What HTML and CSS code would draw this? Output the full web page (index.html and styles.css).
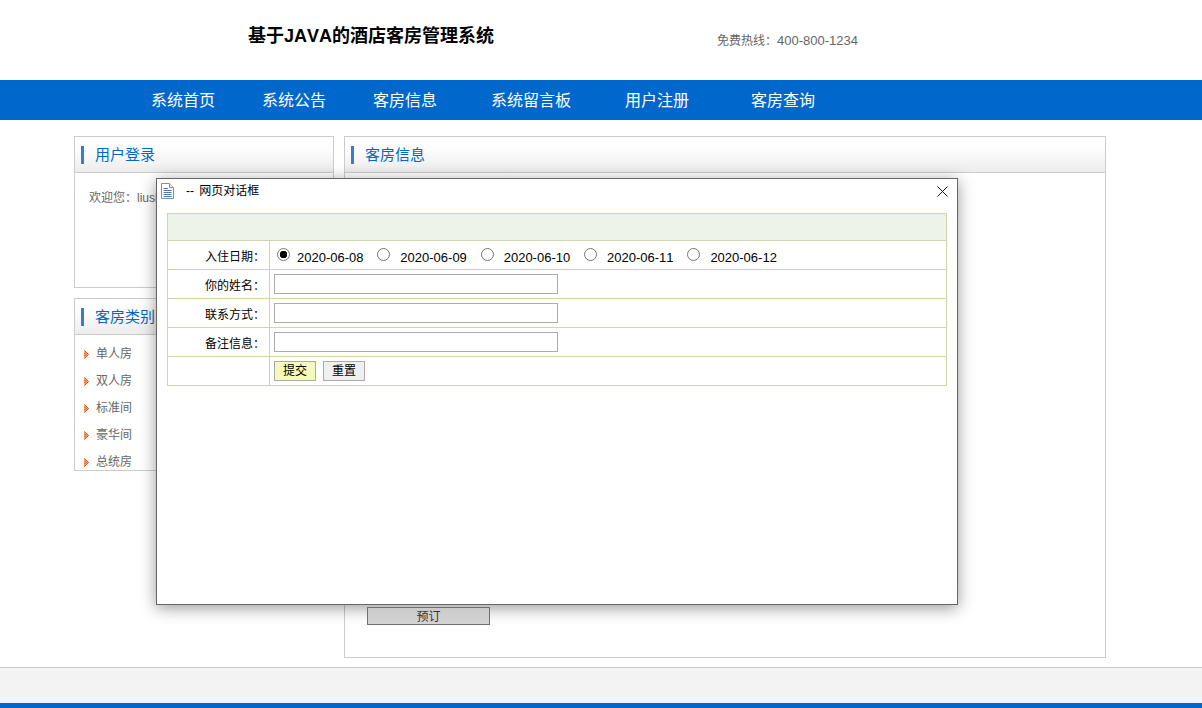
FILE: index.html
```html
<!DOCTYPE html>
<html lang="zh-CN">

<head>
    <meta charset="UTF-8">
    <title>基于JAVA的酒店客房管理系统</title>
    <link rel="stylesheet" href="styles.css">
</head>

<body>
    <div class="header">
        <div class="logo">基于JAVA的酒店客房管理系统</div>
        <div class="hotline">免费热线：<span>400-800-1234</span></div>
    </div>

    <div class="nav">
        <a href="#">系统首页</a>
        <a href="#">系统公告</a>
        <a href="#">客房信息</a>
        <a href="#">系统留言板</a>
        <a href="#">用户注册</a>
        <a href="#">客房查询</a>
    </div>

    <div class="main">
        <div class="side">
            <div class="panel login">
                <div class="panel-title"><h3>用户登录</h3></div>
                <p class="welcome">欢迎您：liushen</p>
            </div>
            <div class="panel category">
                <div class="panel-title"><h3>客房类别</h3></div>
                <ul class="cat-list">
                    <li><svg class="arrow" width="6" height="9" viewBox="0 0 6 9"><path d="M.5 0L5 4.5L.5 9L0 8V1Z" fill="#f4a16e"/><path d="M.5 .5L4.5 4.5L.5 8.5M.5 3L2 4.5L.5 6" fill="none" stroke="#e2561c"/></svg>单人房</li>
                    <li><svg class="arrow" width="6" height="9" viewBox="0 0 6 9"><path d="M.5 0L5 4.5L.5 9L0 8V1Z" fill="#f4a16e"/><path d="M.5 .5L4.5 4.5L.5 8.5M.5 3L2 4.5L.5 6" fill="none" stroke="#e2561c"/></svg>双人房</li>
                    <li><svg class="arrow" width="6" height="9" viewBox="0 0 6 9"><path d="M.5 0L5 4.5L.5 9L0 8V1Z" fill="#f4a16e"/><path d="M.5 .5L4.5 4.5L.5 8.5M.5 3L2 4.5L.5 6" fill="none" stroke="#e2561c"/></svg>标准间</li>
                    <li><svg class="arrow" width="6" height="9" viewBox="0 0 6 9"><path d="M.5 0L5 4.5L.5 9L0 8V1Z" fill="#f4a16e"/><path d="M.5 .5L4.5 4.5L.5 8.5M.5 3L2 4.5L.5 6" fill="none" stroke="#e2561c"/></svg>豪华间</li>
                    <li><svg class="arrow" width="6" height="9" viewBox="0 0 6 9"><path d="M.5 0L5 4.5L.5 9L0 8V1Z" fill="#f4a16e"/><path d="M.5 .5L4.5 4.5L.5 8.5M.5 3L2 4.5L.5 6" fill="none" stroke="#e2561c"/></svg>总统房</li>
                </ul>
            </div>
        </div>
        <div class="panel content">
            <div class="panel-title"><h3>客房信息</h3></div>
            <div class="content-body">
                <button class="book-btn">预订</button>
            </div>
        </div>
    </div>

    <div class="footer"></div>

    <div class="dialog">
        <div class="dialog-title">
            <svg class="doc-icon" width="14" height="16" viewBox="0 0 14 16">
                <path d="M.5 .5H8.5L12.5 4.5V15.5H.5Z" fill="#fff" stroke="#8a8f96"/>
                <path d="M8.5 .5V4.5H12.5" fill="#e8e8e8" stroke="#8a8f96"/>
                <path d="M2.5 5.5H7M2.5 7.5H10.5M2.5 9.5H10.5M2.5 11.5H10.5M2.5 13.5H10.5" stroke="#4a78b5"/>
            </svg>
            <span class="dialog-name">-- 网页对话框</span>
            <svg class="close-icon" width="11" height="11" viewBox="0 0 11 11">
                <path d="M.5 .5L10.5 10.5M10.5 .5L.5 10.5" stroke="#111" fill="none"/>
            </svg>
        </div>
        <table class="form-table">
            <colgroup>
                <col class="col-label">
                <col>
            </colgroup>
            <tr class="head-row">
                <td colspan="2"></td>
            </tr>
            <tr>
                <td class="label">入住日期：</td>
                <td class="dates">
                    <label><input type="radio" name="day" checked>2020-06-08</label>
                    <label><input type="radio" name="day">2020-06-09</label>
                    <label><input type="radio" name="day">2020-06-10</label>
                    <label><input type="radio" name="day">2020-06-11</label>
                    <label><input type="radio" name="day">2020-06-12</label>
                </td>
            </tr>
            <tr>
                <td class="label">你的姓名：</td>
                <td><input type="text" class="txt"></td>
            </tr>
            <tr>
                <td class="label">联系方式：</td>
                <td><input type="text" class="txt"></td>
            </tr>
            <tr>
                <td class="label">备注信息：</td>
                <td><input type="text" class="txt"></td>
            </tr>
            <tr>
                <td class="label"></td>
                <td class="btns">
                    <button class="btn submit">提交</button>
                    <button class="btn">重置</button>
                </td>
            </tr>
        </table>
    </div>
</body>

</html>
```

FILE: styles.css
```css
html, body {
    margin: 0;
    padding: 0;
    height: 708px;
    overflow: hidden;
    background: #fff;
    font-family: "Liberation Sans", "Noto Sans CJK SC", sans-serif;
    font-size: 12px;
    font-kerning: none;
    color: #666;
}

/* header */
.header {
    height: 80px;
    display: flex;
}

.logo {
    margin: 24px 0 0 248px;
    width: 469px;
    font-size: 18px;
    font-weight: bold;
    line-height: 24px;
    color: #000;
}

.hotline {
    margin-top: 32px;
    line-height: 18px;
}

.hotline span {
    font-size: 13px;
}

.nav {
    height: 38px;
    background: #0068cc;
    padding: 2px 0 0 151px;
    display: grid;
    grid-template-columns: 111px 111px 118px 134px 126px auto;
    align-items: center;
}

.nav a {
    color: #fff;
    font-size: 16px;
    line-height: 38px;
    text-decoration: none;
}

/* main */
.main {
    display: flex;
    gap: 10px;
    margin: 16px 0 0 74px;
}

.side {
    width: 260px;
    display: flex;
    flex-direction: column;
    gap: 10px;
}

.panel {
    border: 1px solid #ccc;
    box-sizing: border-box;
    overflow: hidden;
    background: #fff;
}

.login {
    height: 152px;
}

.category {
    height: 173px;
}

.content {
    width: 762px;
    height: 522px;
}

.panel-title {
    height: 26px;
    border-bottom: 1px solid #ccc;
    background: linear-gradient(#fff, #fcfcfc 40%, #ececec);
    padding: 9px 0 0 6px;
}

.panel-title h3 {
    margin: 0;
    padding-left: 11px;
    border-left: 3px solid #3a7cc7;
    font-size: 15px;
    font-weight: normal;
    line-height: 18px;
    color: #0068cc;
}

.welcome {
    margin: 15px 0 0 14px;
    line-height: 20px;
}

.cat-list {
    list-style: none;
    margin: 0;
    padding: 6px 0 0 9px;
}

.cat-list li {
    height: 27px;
    line-height: 27px;
    display: flex;
    align-items: center;
    gap: 6px;
}

.arrow {
    flex: none;
}

.content-body {
    padding: 434px 0 0 22px;
}

.book-btn {
    display: block;
    position: relative;
    z-index: 2;
    width: 123px;
    height: 18px;
    padding: 1px 0 0;
    background: linear-gradient(#cbcbcb, #d3d3d3);
    border: 1px solid #707070;
    font-family: inherit;
    font-size: 12px;
    line-height: 16px;
    color: #333;
}

.footer {
    margin-top: 9px;
    height: 35px;
    border-top: 1px solid #ccc;
    background: #f3f3f3;
    border-bottom: 5px solid #0068cc;
}

/* dialog */
.dialog {
    position: absolute;
    z-index: 1;
    left: 156px;
    top: 178px;
    width: 802px;
    height: 427px;
    box-sizing: border-box;
    border: 1px solid #666;
    background: #fff;
    box-shadow: 0 3px 15px rgba(0, 0, 0, 0.4);
    color: #000;
}

.dialog-title {
    height: 34px;
    position: relative;
    display: flex;
    align-items: flex-start;
}

.doc-icon {
    margin: 4px 0 0 4px;
}

.dialog-name {
    margin-left: 11px;
    line-height: 25px;
    word-spacing: 2px;
}

.close-icon {
    position: absolute;
    right: 9px;
    top: 7px;
}

.form-table {
    width: 780px;
    margin-left: 10px;
    border-collapse: collapse;
    table-layout: fixed;
}

.col-label {
    width: 102px;
}

.form-table td {
    border: 1px solid #cdd7a9;
    height: 28px;
    padding: 0 0 0 4px;
}

.form-table .head-row td {
    height: 26px;
    background: #edf3e9;
}

.form-table td.label {
    padding: 0 4px 0 0;
    text-align: right;
}

.form-table td.dates {
    padding-top: 2px;
    height: 26px;
}

.dates label {
    font-size: 13px;
    margin-right: 7.5px;
    display: inline-block;
}

.dates input {
    appearance: none;
    margin: 0 10px 0 3px;
    width: 13px;
    height: 13px;
    box-sizing: border-box;
    border: 1px solid #767676;
    border-radius: 50%;
    background: #fff;
    vertical-align: 1px;
}

.dates label:first-child input {
    margin-right: 7px;
}

.dates input:checked {
    background: radial-gradient(circle, #000 3.5px, #fff 4px);
}

.txt {
    display: block;
    width: 284px;
    height: 20px;
    box-sizing: border-box;
    margin: 0;
    padding: 0 2px;
    border: 1px solid #aaa;
}

.btns {
    font-size: 0;
}

.btn {
    width: 42px;
    height: 20px;
    padding: 0;
    margin-right: 7px;
    background: #f0f0f0;
    border: 1px solid #aaa;
    font-family: inherit;
    font-size: 12px;
    line-height: 18px;
    color: #000;
}

.submit {
    background: #f5f9b9;
}
```
